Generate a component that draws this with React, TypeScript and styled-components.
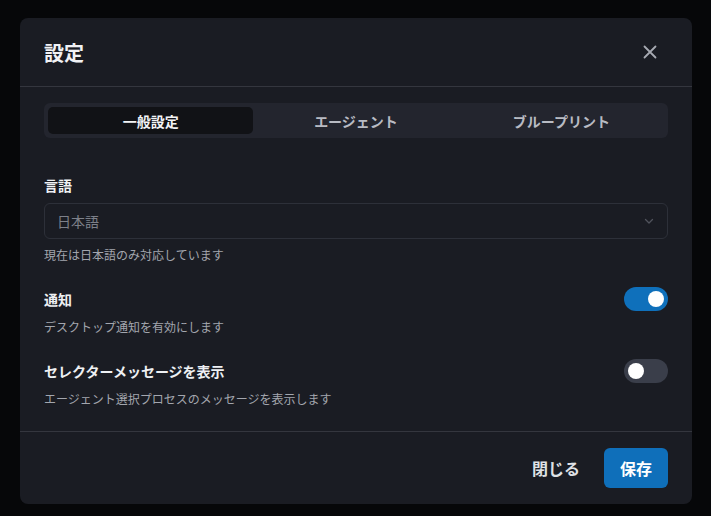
import { useState } from "react"
import styled, { createGlobalStyle } from "styled-components"

const GlobalStyle = createGlobalStyle`
  * { box-sizing: border-box; }
  html, body {
    margin: 0;
    background: #060709;
    font-family: "Noto Sans CJK JP", "Noto Sans", sans-serif;
  }
`

const Page = styled.div`
  padding: 18px 20px;
`

const Modal = styled.div`
  width: 672px;
  background: #1a1c23;
  border-radius: 8px;
  color: #eceef2;
`

const Header = styled.div`
  height: 69px;
  padding: 0 24px;
  display: flex;
  align-items: center;
  justify-content: space-between;
  border-bottom: 1px solid #34363e;
`

const Title = styled.h2`
  margin: 0;
  font-size: 20px;
  font-weight: 700;
  color: #f1f2f5;
`

const CloseButton = styled.button`
  width: 36px;
  height: 36px;
  display: flex;
  align-items: center;
  justify-content: center;
  background: none;
  border: 0;
  color: #a7aab2;
  cursor: pointer;
`

const Body = styled.div`
  padding: 16px 24px 24px;
`

const Tabs = styled.div`
  display: grid;
  grid-template-columns: repeat(3, 1fr);
  padding: 4px;
  height: 35px;
  background: #23252e;
  border-radius: 6px;
  margin-bottom: 37px;
`

const Tab = styled.button<{ $active?: boolean }>`
  border: 0;
  border-radius: 5px;
  font-family: inherit;
  font-size: 14px;
  font-weight: 600;
  background: ${(p) => (p.$active ? "#111216" : "transparent")};
  color: ${(p) => (p.$active ? "#f3f4f6" : "#b8bbc3")};
  cursor: pointer;
`

const Section = styled.div`
  & + & {
    margin-top: 24px;
  }
`

const Row = styled.div`
  display: flex;
  align-items: center;
  justify-content: space-between;
  height: 24px;
`

const Label = styled.div`
  font-size: 14px;
  font-weight: 700;
  line-height: 20px;
  color: #eef0f3;
`

const Hint = styled.div`
  margin-top: 8px;
  font-size: 12px;
  line-height: 16px;
  color: #a3a6ae;
`

const Select = styled.div`
  margin-top: 8px;
  height: 36px;
  padding: 0 12px;
  display: flex;
  align-items: center;
  justify-content: space-between;
  border: 1px solid #2d3039;
  border-radius: 6px;
  font-size: 14px;
  color: #7d8089;
`

const Switch = styled.button<{ $on: boolean }>`
  position: relative;
  width: 44px;
  height: 24px;
  padding: 0;
  border: 0;
  border-radius: 12px;
  background: ${(p) => (p.$on ? "#0f70bb" : "#3a3e4a")};
  cursor: pointer;

  &::after {
    content: "";
    position: absolute;
    top: 4px;
    left: ${(p) => (p.$on ? "24px" : "4px")};
    width: 16px;
    height: 16px;
    border-radius: 50%;
    background: #ffffff;
  }
`

const Footer = styled.div`
  height: 73px;
  padding: 0 24px;
  display: flex;
  align-items: center;
  justify-content: flex-end;
  gap: 8px;
  border-top: 1px solid #34363e;
`

const Button = styled.button<{ $primary?: boolean }>`
  height: 40px;
  padding: 0 16px;
  border: 0;
  border-radius: 6px;
  font-family: inherit;
  font-size: 16px;
  font-weight: 700;
  background: ${(p) => (p.$primary ? "#0f6fba" : "transparent")};
  color: ${(p) => (p.$primary ? "#ffffff" : "#dfe1e5")};
  cursor: pointer;
`

export default function App() {
  const [notify, setNotify] = useState(true)
  const [selector, setSelector] = useState(false)

  return (
    <Page>
      <GlobalStyle />
      <Modal>
        <Header>
          <Title>設定</Title>
          <CloseButton aria-label="close">
            <svg width="14" height="14" viewBox="0 0 14 14" fill="none" stroke="currentColor" strokeWidth="1.8" strokeLinecap="round">
              <path d="M1.5 1.5l11 11M12.5 1.5l-11 11" />
            </svg>
          </CloseButton>
        </Header>
        <Body>
          <Tabs>
            <Tab $active>一般設定</Tab>
            <Tab>エージェント</Tab>
            <Tab>ブループリント</Tab>
          </Tabs>

          <Section>
            <Label>言語</Label>
            <Select>
              <span>日本語</span>
              <svg width="12" height="12" viewBox="0 0 12 12" fill="none" stroke="#50535c" strokeWidth="1.3" strokeLinecap="round" strokeLinejoin="round">
                <path d="M2.5 4.5L6 8l3.5-3.5" />
              </svg>
            </Select>
            <Hint>現在は日本語のみ対応しています</Hint>
          </Section>

          <Section>
            <Row>
              <Label>通知</Label>
              <Switch $on={notify} onClick={() => setNotify(!notify)} />
            </Row>
            <Hint>デスクトップ通知を有効にします</Hint>
          </Section>

          <Section>
            <Row>
              <Label>セレクターメッセージを表示</Label>
              <Switch $on={selector} onClick={() => setSelector(!selector)} />
            </Row>
            <Hint>エージェント選択プロセスのメッセージを表示します</Hint>
          </Section>
        </Body>
        <Footer>
          <Button>閉じる</Button>
          <Button $primary>保存</Button>
        </Footer>
      </Modal>
    </Page>
  )
}
